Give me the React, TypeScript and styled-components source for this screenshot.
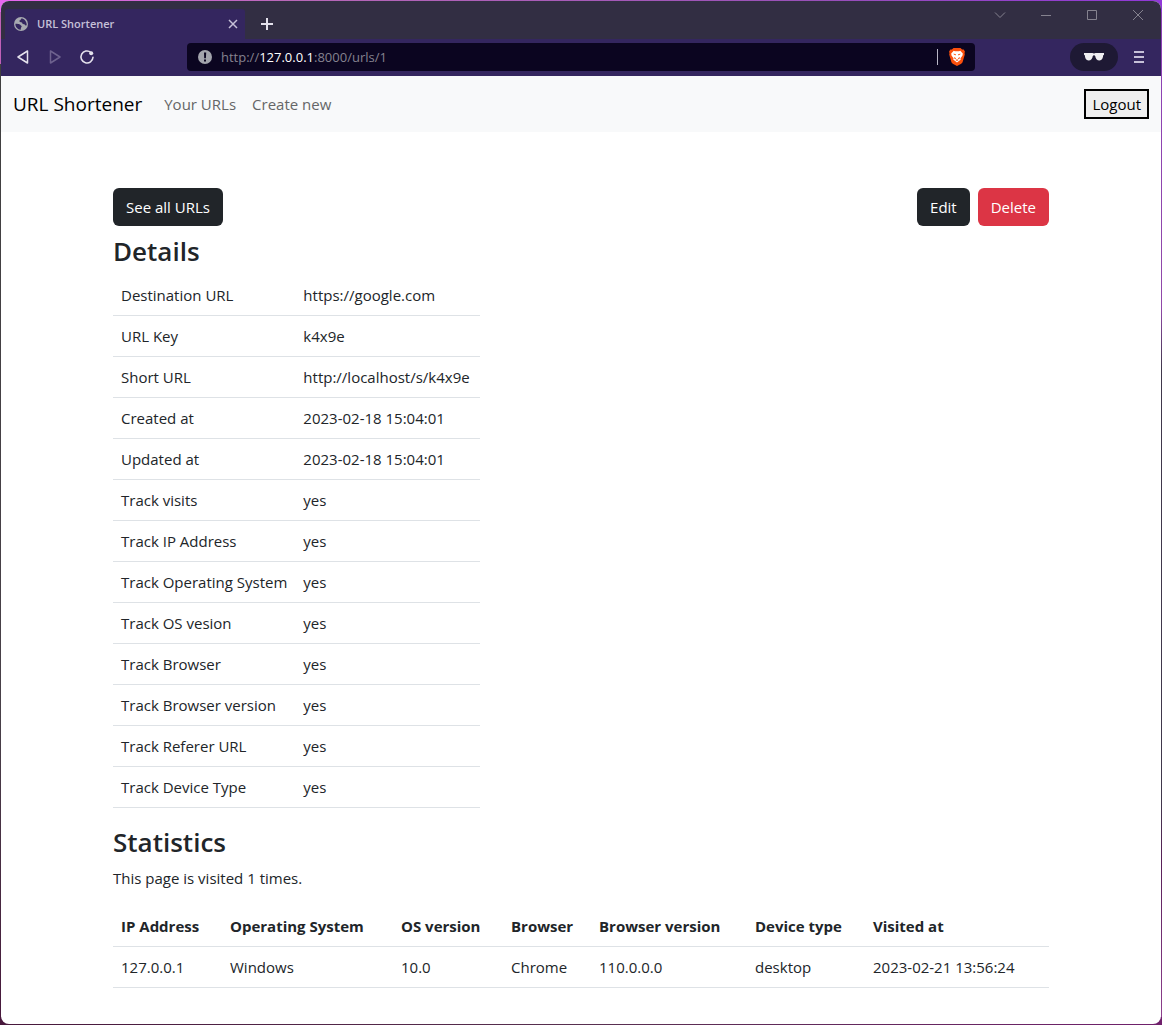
import React, { useState } from "react";
import styled, { createGlobalStyle } from "styled-components";

const GlobalStyle = createGlobalStyle`
  *, *::before, *::after { box-sizing: border-box; }
  body {
    margin: 0;
    background: #5a2f52;
    font-family: "Open Sans", "Noto Sans", sans-serif;
    font-size: 15px;
    line-height: 24px;
    color: #212529;
  }
  button, input { font: inherit; color: inherit; }
`;

const Desktop = styled.div`
  min-height: 100vh;
  padding: 1px;
  display: flex;
  background:
    linear-gradient(90deg, #e868f0 0, #b868b8 25%, #9850b8 70%, #9038d8 100%) top / 100% 12px no-repeat,
    linear-gradient(90deg, #48183c, #583050 50%, #70206c) bottom / 100% 8px no-repeat,
    linear-gradient(#c060b8 0 64px, #404040 64px, #484048 70%, #48183c) left / 50% 100% no-repeat,
    linear-gradient(#8c40b8, #9048a8 30%, #40384c 36%, #40384c 78%, #582058 84%, #904090) right / 50% 100% no-repeat;
`;

const BrowserWindow = styled.div`
  flex: 1;
  min-width: 0;
  display: flex;
  flex-direction: column;
  background: #fff;
  border-radius: 8px;
  overflow: hidden;
`;

const TabStrip = styled.div`
  display: flex;
  align-items: flex-end;
  height: 38px;
  padding-left: 4px;
  background: #322e43;
`;

const Tab = styled.div`
  display: flex;
  align-items: center;
  gap: 8px;
  width: 240px;
  height: 30px;
  padding: 0 5px 0 8px;
  border-radius: 3px 3px 0 0;
  background: #34265f;
  color: #c6c0d8;
  font-size: 11px;
  font-weight: 600;
`;

const TabTitle = styled.span`
  flex: 1;
`;

const IconButton = styled.button<{ $w: number; $h: number; $color?: string }>`
  display: flex;
  align-items: center;
  justify-content: center;
  width: ${(p) => p.$w}px;
  height: ${(p) => p.$h}px;
  padding: 0;
  border: 0;
  background: none;
  color: ${(p) => p.$color ?? "#e4e1ec"};
`;

const NewTab = styled.div`
  flex: 1;
  padding-left: 6px;
`;

const WindowControls = styled.div`
  display: flex;
  align-self: flex-start;
`;

const Toolbar = styled.div`
  display: flex;
  align-items: center;
  height: 37px;
  padding: 0 6px 2px;
  background: #34265f;
`;

const ToolbarSide = styled.div<{ $end?: boolean }>`
  flex: 0 0 180px;
  display: flex;
  align-items: center;
  justify-content: ${(p) => (p.$end ? "flex-end" : "flex-start")};
  padding-right: 3px;
`;

const AddressBar = styled.div`
  flex: 1;
  display: flex;
  align-items: center;
  height: 28px;
  padding: 0 10px 0 11px;
  border-radius: 4px;
  background: #0b0520;
`;

const Address = styled.button`
  flex: 1;
  padding: 0 0 0 9px;
  border: 0;
  background: none;
  color: #85828f;
  font-size: 13px;
  text-align: left;
  cursor: text;
`;

const AddressInput = styled.input`
  flex: 1;
  padding: 0 0 0 9px;
  border: 0;
  outline: 0;
  background: none;
  color: #fff;
  font-size: 13px;
`;

const Host = styled.span`
  color: #fff;
`;

const Shield = styled.span`
  display: flex;
  align-items: center;
  height: 16px;
  padding-left: 11px;
  border-left: 1px solid #b9b6c6;
`;

const PrivateBadge = styled.button`
  display: flex;
  align-items: center;
  justify-content: center;
  width: 48px;
  height: 28px;
  margin-right: 8px;
  padding: 0;
  border: 0;
  border-radius: 14px;
  background: #1e1934;
`;

const Navbar = styled.nav`
  display: flex;
  align-items: center;
  height: 56px;
  padding: 0 12px;
  background: #f8f9fa;
`;

const Brand = styled.a`
  margin-right: 14px;
  color: #000;
  font-size: 19px;
  text-decoration: none;
`;

const NavLink = styled.a`
  padding: 0 8px;
  color: #656667;
  text-decoration: none;
`;

const Logout = styled.button`
  height: 30px;
  margin-left: auto;
  padding: 0 6px;
  border: 2px solid #000;
  background: #efefef;
  color: #000;
`;

const Container = styled.main`
  width: 100%;
  max-width: 960px;
  margin: 0 auto;
  padding: 56px 12px 16px;
`;

const Actions = styled.div`
  display: flex;
  justify-content: space-between;
  margin-bottom: 7px;
`;

const ActionGroup = styled.div`
  display: flex;
  gap: 8px;
`;

const Button = styled.button<{ $danger?: boolean }>`
  height: 38px;
  padding: 0 13px;
  border: 0;
  border-radius: 6px;
  background: ${(p) => (p.$danger ? "#dc3545" : "#212529")};
  color: #fff;
`;

const Heading = styled.h3`
  margin: 0 0 6px;
  font-size: 26px;
  font-weight: 600;
  line-height: 36px;
`;

const Summary = styled.p`
  margin: 0 0 16px;
`;

const Table = styled.table<{ $full?: boolean }>`
  width: ${(p) => (p.$full ? "100%" : "auto")};
  margin-bottom: 16px;
  border-collapse: separate;
  border-spacing: 0;
  white-space: nowrap;
  text-align: left;
`;

const Cell = styled.td`
  padding: 8px;
  border-bottom: 1px solid #dee2e6;
`;

const HeadCell = styled.th<{ $w: number }>`
  width: ${(p) => p.$w}px;
  padding: 8px;
  border-bottom: 1px solid #dee2e6;
  font-weight: 700;
`;

const RowLabel = styled.th`
  width: 182px;
  padding: 8px;
  border-bottom: 1px solid #dee2e6;
  font-weight: 400;
`;

const ValueCell = styled(Cell)`
  width: 185px;
`;

const details = [
  ["Destination URL", "https://google.com"],
  ["URL Key", "k4x9e"],
  ["Short URL", "http://localhost/s/k4x9e"],
  ["Created at", "2023-02-18 15:04:01"],
  ["Updated at", "2023-02-18 15:04:01"],
  ["Track visits", "yes"],
  ["Track IP Address", "yes"],
  ["Track Operating System", "yes"],
  ["Track OS vesion", "yes"],
  ["Track Browser", "yes"],
  ["Track Browser version", "yes"],
  ["Track Referer URL", "yes"],
  ["Track Device Type", "yes"],
];

const columns = [
  { title: "IP Address", width: 109 },
  { title: "Operating System", width: 171 },
  { title: "OS version", width: 110 },
  { title: "Browser", width: 88 },
  { title: "Browser version", width: 156 },
  { title: "Device type", width: 118 },
  { title: "Visited at", width: 184 },
];

const visits = [
  ["127.0.0.1", "Windows", "10.0", "Chrome", "110.0.0.0", "desktop", "2023-02-21 13:56:24"],
];

const Globe = () => (
  <svg width="16" height="16" viewBox="0 0 16 16" aria-hidden="true">
    <circle cx="8" cy="8" r="7" fill="#a7a9b0" />
    <path
      d="M2.4 7.800c1.500-.3 3.400-.1 4.600.7.600.6.800 1.100 1.500 1.400.6.200 0 .9-.4 1.500l-.6 2.500C4.600 13.500 2.200 11 2.400 7.800zM8.700 2.300l-1.500 1.900-1 .6.700 1.300 2.100.3.700 1.500 1.700.4 1 1.300 1.300-.3c.2-3-1.700-6.200-5-7z"
      fill="#34265f"
    />
  </svg>
);

const Stroke = ({ d, size, width = 1 }: { d: string; size: number; width?: number }) => (
  <svg width={size} height={size} viewBox={`0 0 ${size} ${size}`} fill="none" stroke="currentColor" strokeWidth={width} strokeLinejoin="round" aria-hidden="true">
    <path d={d} />
  </svg>
);

const Reload = () => (
  <svg width="16" height="16" viewBox="0 0 16 16" fill="none" aria-hidden="true">
    <path d="M11.8 3.300A6 6 0 1 0 14 8.300" stroke="currentColor" strokeWidth="1.600" strokeLinecap="round" />
    <circle cx="12.200" cy="4.200" r="2" fill="currentColor" />
  </svg>
);

const Info = () => (
  <svg width="14" height="14" viewBox="0 0 14 14" aria-hidden="true">
    <circle cx="7" cy="7" r="7" fill="#a3a4ac" />
    <path d="M6 2.500h2.200L7.900 8.300H6.200zM6 9.500h2v2H6z" fill="#0b0520" />
  </svg>
);

const Lion = () => (
  <svg width="16" height="18" viewBox="0 0 16 18" aria-hidden="true">
    <path d="M4.500 0h7l1.600 1.500 1.600-.1 1.300 2.300-.5 1.300.3 1.500-2.100 7.300c-.3 1.100-.9 1.700-1.900 2.300L8 18l-3.800-1.900c-1-.6-1.600-1.200-1.900-2.300L.2 6.500.500 5 0 3.700l1.300-2.300 1.600.1z" fill="#fb4f0c" />
    <path d="M4.700 2.800 6 3.200h4l1.300-.4 2.500 2.700-.3 2-2 2.800.2 1.500-1.500 1L8 14.600l-2.200-1.800-1.500-1 .2-1.500-2-2.800-.3-2z" fill="#fff" />
    <path d="m4 5.700 2.900.3-.5 1.400zM12 5.700 9.100 6l.5 1.400zM5.200 9l1.900 1.300-.8.9-1-.6zM10.800 9l-1.900 1.300.8.9 1-.6zM6.500 12 8 11.200l1.500.8L8 13z" fill="#fb4f0c" />
  </svg>
);

const Glasses = () => (
  <svg width="20" height="8" viewBox="0 0 20 8" aria-hidden="true">
    <path d="M0 0h8.500l1.500.6L11.500 0H20v1.700l-.8.600C19 5.400 17.900 7.500 15.500 7.500 13 7.500 11.500 5.500 11.200 3 11 1.900 9 1.900 8.800 3 8.500 5.500 7 7.500 4.500 7.500 2.100 7.500 1 5.400.8 2.300L0 1.700z" fill="#f0eff2" />
  </svg>
);

function AddressField() {
  const [editing, setEditing] = useState(false);
  if (editing) {
    return (
      <AddressInput
        autoFocus
        aria-label="Address"
        defaultValue="http://127.0.0.1:8000/urls/1"
        onBlur={() => setEditing(false)}
      />
    );
  }
  return (
    <Address onClick={() => setEditing(true)}>
      http://<Host>127.0.0.1</Host>:8000/urls/1
    </Address>
  );
}

export default function App() {
  return (
    <Desktop>
      <GlobalStyle />
      <BrowserWindow>
        <TabStrip>
          <Tab>
            <Globe />
            <TabTitle>URL Shortener</TabTitle>
            <IconButton $w={14} $h={14} $color="#c6c0d8" aria-label="Close tab">
              <Stroke size={10} width={1.5} d="M1 1l8 8M9 1L1 9" />
            </IconButton>
          </Tab>
          <NewTab>
            <IconButton $w={32} $h={30} aria-label="New tab">
              <Stroke size={12} width={2} d="M6 0v12M0 6h12" />
            </IconButton>
          </NewTab>
          <WindowControls>
            <IconButton $w={46} $h={28} $color="#85828f" aria-label="Search tabs">
              <Stroke size={12} d="M1 3.500l5 5 5-5" />
            </IconButton>
            <IconButton $w={46} $h={28} $color="#85828f" aria-label="Minimize">
              <Stroke size={10} d="M0 5.500h10" />
            </IconButton>
            <IconButton $w={46} $h={28} $color="#85828f" aria-label="Maximize">
              <Stroke size={10} d="M.5.500h9v9h-9z" />
            </IconButton>
            <IconButton $w={46} $h={28} $color="#85828f" aria-label="Close window">
              <Stroke size={10} d="M0 0l10 10M10 0L0 10" />
            </IconButton>
          </WindowControls>
        </TabStrip>
        <Toolbar>
          <ToolbarSide>
            <IconButton $w={32} $h={28} aria-label="Back">
              <Stroke size={14} width={1.5} d="M11.500 1v12L2 7z" />
            </IconButton>
            <IconButton $w={32} $h={28} $color="#6d618e" aria-label="Forward">
              <Stroke size={14} width={1.5} d="M2.500 1v12L12 7z" />
            </IconButton>
            <IconButton $w={32} $h={28} aria-label="Reload">
              <Reload />
            </IconButton>
          </ToolbarSide>
          <AddressBar>
            <Info />
            <AddressField />
            <Shield>
              <Lion />
            </Shield>
          </AddressBar>
          <ToolbarSide $end>
            <PrivateBadge aria-label="Private window">
              <Glasses />
            </PrivateBadge>
            <IconButton $w={26} $h={28} $color="#c6c0d8" aria-label="Menu">
              <Stroke size={12} width={2} d="M1 1h10M1 6h10M1 11h10" />
            </IconButton>
          </ToolbarSide>
        </Toolbar>
        <Navbar>
          <Brand href="#">URL Shortener</Brand>
          <NavLink href="#urls">Your URLs</NavLink>
          <NavLink href="#create">Create new</NavLink>
          <Logout>Logout</Logout>
        </Navbar>
        <Container>
          <Actions>
            <Button>See all URLs</Button>
            <ActionGroup>
              <Button>Edit</Button>
              <Button $danger>Delete</Button>
            </ActionGroup>
          </Actions>
          <Heading>Details</Heading>
          <Table>
            <tbody>
              {details.map(([label, value]) => (
                <tr key={label}>
                  <RowLabel scope="row">{label}</RowLabel>
                  <ValueCell>{value}</ValueCell>
                </tr>
              ))}
            </tbody>
          </Table>
          <Heading>Statistics</Heading>
          <Summary>This page is visited 1 times.</Summary>
          <Table $full>
            <thead>
              <tr>
                {columns.map((c) => (
                  <HeadCell key={c.title} $w={c.width} scope="col">
                    {c.title}
                  </HeadCell>
                ))}
              </tr>
            </thead>
            <tbody>
              {visits.map((visit) => (
                <tr key={visit[6]}>
                  {visit.map((value, i) => (
                    <Cell key={columns[i].title}>{value}</Cell>
                  ))}
                </tr>
              ))}
            </tbody>
          </Table>
        </Container>
      </BrowserWindow>
    </Desktop>
  );
}
